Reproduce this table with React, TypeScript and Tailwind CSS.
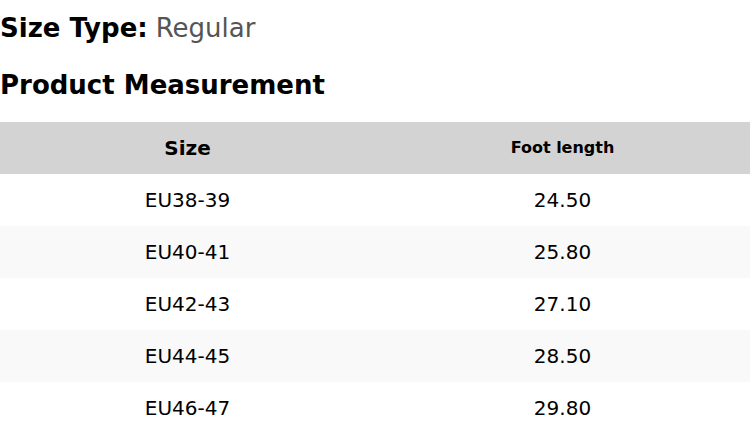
const rows = [
  { size: "EU38-39", foot: "24.50" },
  { size: "EU40-41", foot: "25.80" },
  { size: "EU42-43", foot: "27.10" },
  { size: "EU44-45", foot: "28.50" },
  { size: "EU46-47", foot: "29.80" },
];

export default function App() {
  return (
    <div className="w-[750px] bg-white text-black font-['DejaVu_Sans',sans-serif]">
      <p className="h-[56px] flex items-center text-[26px] leading-none">
        <span className="font-bold">Size Type:</span>
        <span className="ml-2 text-[#555555]">Regular</span>
      </p>
      <h2 className="h-[57px] flex items-center text-[26px] font-bold leading-none">Product Measurement</h2>
      <table className="w-full mt-[9px] border-collapse">
        <thead>
          <tr className="bg-[#d3d3d3] h-[52px]">
            <th className="w-1/2 text-[20px] font-bold">Size</th>
            <th className="w-1/2 text-[16px] font-bold">Foot length</th>
          </tr>
        </thead>
        <tbody>
          {rows.map((r, i) => (
            <tr key={r.size} className={`h-[52px] ${i % 2 === 1 ? "bg-[#f9f9f9]" : "bg-white"}`}>
              <td className="text-center text-[20px]">{r.size}</td>
              <td className="text-center text-[20px]">{r.foot}</td>
            </tr>
          ))}
        </tbody>
      </table>
    </div>
  );
}
